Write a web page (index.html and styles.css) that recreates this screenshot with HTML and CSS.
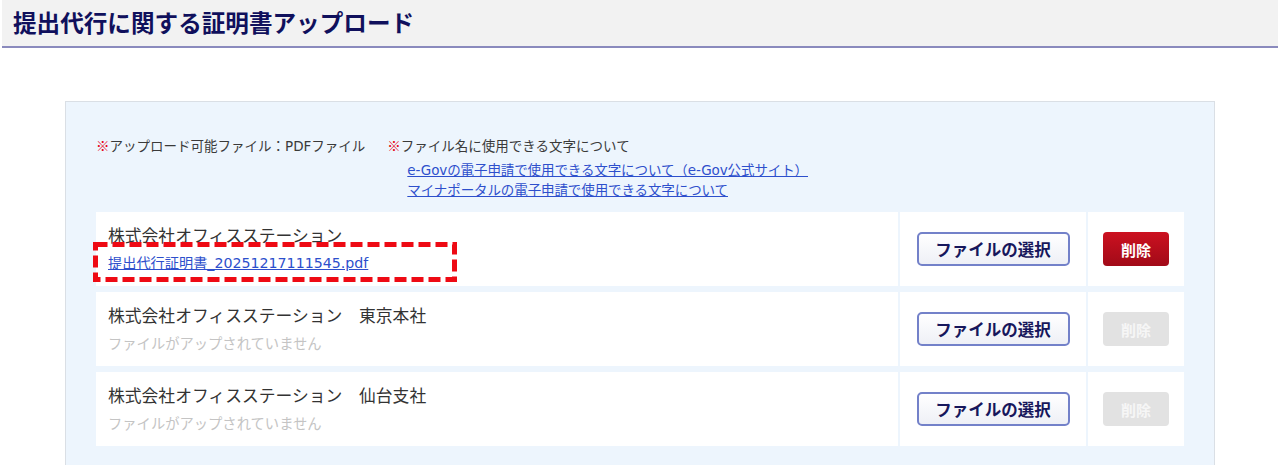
FILE: index.html
```html
<!DOCTYPE html>
<html lang="ja">
<head>
<meta charset="utf-8">
<title>提出代行に関する証明書アップロード</title>
<link rel="stylesheet" href="styles.css">
</head>
<body>
<header class="page-header">
  <h1 class="page-title">提出代行に関する証明書アップロード</h1>
</header>
<main class="panel">
  <div class="notes">
    <p class="note"><span class="mark">※</span>アップロード可能ファイル：PDFファイル</p>
    <div class="note-group">
      <p class="note"><span class="mark">※</span>ファイル名に使用できる文字について</p>
      <ul class="note-links">
        <li><a href="#">e-Govの電子申請で使用できる文字について（e-Gov公式サイト）</a></li>
        <li><a href="#">マイナポータルの電子申請で使用できる文字について</a></li>
      </ul>
    </div>
  </div>
  <div class="rows">
    <div class="row">
      <div class="cell name-cell">
        <div class="company">株式会社オフィスステーション</div>
        <div class="file"><a href="#">提出代行証明書_20251217111545.pdf</a></div>
        <svg class="highlight" width="364" height="40" viewBox="0 0 364 40" aria-hidden="true">
          <rect x="2.5" y="2.5" width="359" height="35" fill="none" stroke="#ee0a14" stroke-width="5" stroke-dasharray="12 5"/>
        </svg>
      </div>
      <div class="cell btn-cell"><button class="btn-select">ファイルの選択</button></div>
      <div class="cell del-cell"><button class="btn-delete">削除</button></div>
    </div>
    <div class="row">
      <div class="cell name-cell">
        <div class="company">株式会社オフィスステーション　東京本社</div>
        <div class="file empty">ファイルがアップされていません</div>
      </div>
      <div class="cell btn-cell"><button class="btn-select">ファイルの選択</button></div>
      <div class="cell del-cell"><button class="btn-delete disabled" disabled>削除</button></div>
    </div>
    <div class="row">
      <div class="cell name-cell">
        <div class="company">株式会社オフィスステーション　仙台支社</div>
        <div class="file empty">ファイルがアップされていません</div>
      </div>
      <div class="cell btn-cell"><button class="btn-select">ファイルの選択</button></div>
      <div class="cell del-cell"><button class="btn-delete disabled" disabled>削除</button></div>
    </div>
  </div>
</main>
</body>
</html>
```
FILE: styles.css
```css
* { box-sizing: border-box; }
html, body { margin: 0; padding: 0; background: #fff; }
body {
  font-family: "DejaVu Sans", "Noto Sans CJK JP", sans-serif;
  color: #333;
}
.page-header {
  margin: 0 2px;
  height: 48px;
  background: #f2f2f2;
  border-bottom: 2px solid #8a8abd;
  padding-left: 11px;
}
.page-title {
  margin: 0;
  font-family: "Noto Sans CJK JP", sans-serif;
  font-size: 23.6px;
  line-height: 44px;
  font-weight: 700;
  color: #10105c;
}
.panel {
  margin: 53px 0 0 65px;
  width: 1150px;
  background: #edf5fd;
  border: 1px solid #dadfe5;
  border-bottom: none;
  padding: 33px 30px 30px 30px;
}
.notes {
  display: flex;
  gap: 22px;
  font-size: 13.5px;
  line-height: 20px;
  color: #3a3a3a;
}
.note { margin: 0; }
.mark {
  font-family: "Noto Sans CJK JP", sans-serif;
  color: #e60012;
  font-weight: 700;
}
.note-links {
  list-style: none;
  margin: 4px 0 0 20px;
  padding: 0;
  letter-spacing: -0.1px;
}
.note-links a { color: #2d4fcc; text-decoration: underline; }
.rows {
  margin-top: 12px;
  display: flex;
  flex-direction: column;
  gap: 6px;
}
.row {
  display: grid;
  grid-template-columns: 1fr 186px 96px;
  gap: 2px;
  height: 74px;
}
.cell { background: #fff; }
.name-cell {
  position: relative;
  padding: 11px 12px 0 12px;
}
.company {
  font-family: "Noto Sans CJK JP", sans-serif;
  font-size: 16.8px;
  line-height: 24px;
  color: #333;
}
.file {
  margin-top: 6px;
  font-size: 14.2px;
  line-height: 20px;
}
.file a { color: #2d4fcc; text-decoration: underline; }
.file.empty {
  font-family: "Noto Sans CJK JP", sans-serif;
  color: #c4c4c4;
  font-size: 14.3px;
}
.highlight {
  position: absolute;
  left: -3px;
  top: 30px;
}
.btn-cell, .del-cell {
  display: flex;
  align-items: center;
  justify-content: center;
}
.btn-select {
  width: 153px;
  height: 34px;
  border: 2px solid #7381c9;
  border-radius: 5px;
  background: linear-gradient(#ffffff, #eef0f6);
  font-family: "Noto Sans CJK JP", sans-serif;
  font-size: 16.5px;
  font-weight: 700;
  color: #17175c;
  padding: 0;
  cursor: pointer;
}
.btn-delete {
  width: 66px;
  height: 34px;
  border: none;
  border-radius: 4px;
  background: linear-gradient(#cc1120, #a10a18);
  font-family: "Noto Sans CJK JP", sans-serif;
  font-size: 15px;
  font-weight: 700;
  color: #fff;
  padding: 0;
  cursor: pointer;
}
.btn-delete.disabled {
  background: #e2e2e2;
  color: #f6f6f6;
  cursor: default;
}
```
